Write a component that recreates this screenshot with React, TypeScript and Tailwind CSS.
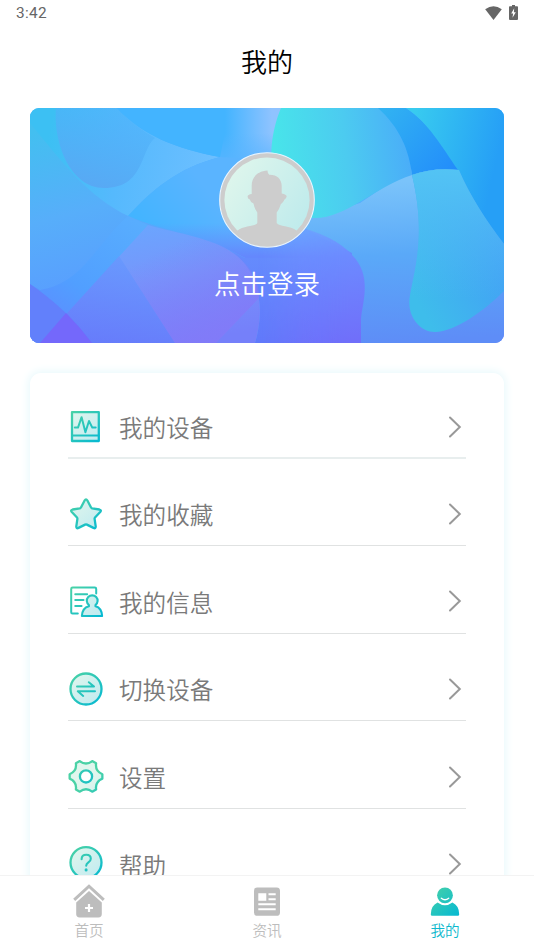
import type { ReactNode } from 'react';

/* ------------------------------------------------------------------ */
/*  Menu icons — two-tone line art on a 36px grid                     */
/* ------------------------------------------------------------------ */

const STROKE = 'url(#icon-stroke)';
const FILL = 'url(#icon-fill)';

/** Gradients shared by the menu icons and the active tab. */
function IconGradients() {
    return (
        <svg className="absolute size-0" aria-hidden="true">
            <defs>
                <linearGradient id="icon-stroke" gradientUnits="userSpaceOnUse" x1="4" y1="2" x2="31" y2="33">
                    <stop offset="0" stopColor="#4ad2a6" />
                    <stop offset="1" stopColor="#06b9d2" />
                </linearGradient>
                <linearGradient id="icon-fill" gradientUnits="userSpaceOnUse" x1="4" y1="2" x2="31" y2="33">
                    <stop offset="0" stopColor="#e0f6ed" />
                    <stop offset="1" stopColor="#bfeaf0" />
                </linearGradient>
            </defs>
        </svg>
    );
}

function MenuIcon({ children }: { children: ReactNode }) {
    return (
        <svg
            viewBox="0 0 36 36"
            className="size-9 shrink-0 overflow-visible"
            fill="none"
            stroke={STROKE}
            strokeWidth="2.3"
            strokeLinecap="round"
            strokeLinejoin="round"
            aria-hidden="true"
        >
            {children}
        </svg>
    );
}

const MENU: { label: string; icon: ReactNode }[] = [
    {
        label: '我的设备',
        icon: (
            <>
                <rect x="4" y="3.2" width="26.8" height="28.8" fill={FILL} />
                <path d="M4 26.4 30.8 26.5" strokeWidth="2" />
                <path d="M6.8 18.6H10l3.6-10.4 3.8 15L21 12l3.3 6.6h3.4" strokeWidth="2" />
            </>
        ),
    },
    {
        label: '我的收藏',
        icon: (
            <path
                d="M16.6 3.7q1.4-2.4 2.8 0l3.5 6.8q.4.8 1.3 1l7.2 1.2q2.4.6.8 2.5l-5.2 5.5q-.5.6-.4 1.4l1.1 7.5q.1 2.6-2.2 1.5l-6.6-3.3q-.9-.4-1.8 0l-6.6 3.3q-2.3 1.1-2.2-1.5l1.1-7.5q.1-.8-.4-1.4L3.8 15.2q-1.6-1.9.8-2.5l7.2-1.2q.9-.2 1.3-1z"
                transform="translate(0 .8)"
                fill={FILL}
            />
        ),
    },
    {
        label: '我的信息',
        icon: (
            <>
                <path d="M28.2 9.4V5q0-1.4-1.4-1.4H4.6Q3.2 3.6 3.2 5v23.2q0 1.4 1.4 1.4h5.2" strokeWidth="2" />
                <path d="M7.2 10.2h12M7.2 16h8.4M7.2 22h6.4" strokeWidth="1.9" />
                <path
                    d="M20.9 21a5.4 5.4 0 1 1 6.6 0v1.2q6.2 1.6 6.6 9.8H13.9q.4-8.2 7-9.8z"
                    fill={FILL}
                    strokeWidth="2.1"
                />
            </>
        ),
    },
    {
        label: '切换设备',
        icon: (
            <>
                <circle cx="18" cy="17" r="15.5" fill={FILL} />
                <path d="M9 14.5h17L20.8 10.2M27 19.3H9.8l5.4 4.6" strokeWidth="2" />
            </>
        ),
    },
    {
        label: '设置',
        icon: (
            <>
                <path
                    transform="translate(18 17.4)"
                    d="M16.35-2.2v4.4Q9 5.2 10.1 13.1L6.2 15.3Q0 10.4-6.2 15.3l-3.9-2.2Q-9 5.2-16.35 2.2v-4.4Q-9-5.2-10.1-13.1L-6.2-15.3Q0-10.4 6.2-15.3l3.9 2.2Q9-5.2 16.35-2.2z"
                    fill={FILL}
                />
                <circle cx="18" cy="17.4" r="6.1" fill="#fff" />
            </>
        ),
    },
    {
        label: '帮助',
        icon: (
            <>
                <circle cx="18" cy="15.6" r="15.5" fill={FILL} />
                <path d="M13.6 12.2q0-4.5 4.7-4.5 4.5 0 4.5 4 0 2-2.4 3.7-2.2 1.5-2.2 3.3" strokeWidth="2.1" />
                <path d="M18.1 22.8v.2" strokeWidth="3" />
            </>
        ),
    },
];

/* ------------------------------------------------------------------ */
/*  Status bar                                                        */
/* ------------------------------------------------------------------ */

function StatusBar() {
    return (
        <div className="flex h-7 shrink-0 items-center justify-between px-4 text-[#666]">
            <span className="font-[Roboto] text-[15.4px] font-[450] tracking-[0.3px]">3:42</span>
            <div className="flex items-center gap-[7px] pb-[3px]">
                <svg viewBox="0 0 17 14" className="h-3.5 w-[17px]" fill="currentColor">
                    <path d="M8.5 14 .2 3.2Q8.5-2.6 16.8 3.2z" />
                </svg>
                <svg viewBox="0 0 9 15" className="h-[15px] w-[9px]">
                    <path d="M3 0h3v1.2h2.2q.8 0 .8.8v12q0 1-1 1H1q-1 0-1-1V2q0-.8.8-.8H3z" fill="currentColor" />
                    <path d="M5.2 3.2 2.2 8.6h1.9l-.6 4.2 3.3-5.6H4.9z" fill="#fff" />
                </svg>
            </div>
        </div>
    );
}

/* ------------------------------------------------------------------ */
/*  Login banner                                                      */
/* ------------------------------------------------------------------ */

function BannerArt() {
    return (
        <svg viewBox="0 0 474 235" preserveAspectRatio="none" className="absolute inset-0 size-full" aria-hidden="true">
            <defs>
                <linearGradient id="sky" x1="0" y1="0" x2="0" y2="1">
                    <stop offset="0" stopColor="#45b4ff" />
                    <stop offset=".48" stopColor="#56adff" />
                    <stop offset=".62" stopColor="#658cfd" />
                    <stop offset="1" stopColor="#6079fb" />
                </linearGradient>
                <linearGradient id="haze" gradientUnits="userSpaceOnUse" x1="195" y1="0" x2="242" y2="0">
                    <stop offset="0" stopColor="#8fc3ff" stopOpacity="0" />
                    <stop offset="1" stopColor="#8fc3ff" />
                </linearGradient>
                <linearGradient id="haze-down" gradientUnits="userSpaceOnUse" x1="0" y1="25" x2="0" y2="62">
                    <stop offset="0" stopColor="#5ab4ff" stopOpacity="0" />
                    <stop offset="1" stopColor="#5ab4ff" />
                </linearGradient>
                <linearGradient id="band" gradientUnits="userSpaceOnUse" x1="20" y1="20" x2="180" y2="50">
                    <stop offset="0" stopColor="#3cc0f3" />
                    <stop offset=".45" stopColor="#55b9fd" />
                    <stop offset="1" stopColor="#6cbfff" />
                </linearGradient>
                <linearGradient id="blob" gradientUnits="userSpaceOnUse" x1="95" y1="0" x2="70" y2="80">
                    <stop offset="0" stopColor="#4db4fb" stopOpacity=".5" />
                    <stop offset="1" stopColor="#58a9f4" />
                </linearGradient>
                <linearGradient id="wing" gradientUnits="userSpaceOnUse" x1="105" y1="108" x2="165" y2="65">
                    <stop offset="0" stopColor="#43b4ff" />
                    <stop offset="1" stopColor="#5ab4ff" />
                </linearGradient>
                <linearGradient id="wing-shade" gradientUnits="userSpaceOnUse" x1="0" y1="115" x2="0" y2="148">
                    <stop offset="0" stopColor="#658cfd" stopOpacity="0" />
                    <stop offset="1" stopColor="#6488fd" />
                </linearGradient>
                <linearGradient id="hill" gradientUnits="userSpaceOnUse" x1="20" y1="20" x2="65" y2="190">
                    <stop offset="0" stopColor="#43bff0" />
                    <stop offset=".5" stopColor="#57aefa" />
                    <stop offset="1" stopColor="#599cff" />
                </linearGradient>
                <linearGradient id="hill-blue" gradientUnits="userSpaceOnUse" x1="100" y1="110" x2="30" y2="220">
                    <stop offset="0" stopColor="#58adfe" />
                    <stop offset=".65" stopColor="#519fff" />
                    <stop offset="1" stopColor="#5c8dff" />
                </linearGradient>
                <linearGradient id="lilac" gradientUnits="userSpaceOnUse" x1="130" y1="115" x2="150" y2="235">
                    <stop offset="0" stopColor="#6ba5fe" />
                    <stop offset=".45" stopColor="#7695fb" />
                    <stop offset="1" stopColor="#7580fa" />
                </linearGradient>
                <linearGradient id="lilac-left" gradientUnits="userSpaceOnUse" x1="100" y1="130" x2="80" y2="235">
                    <stop offset="0" stopColor="#679fff" />
                    <stop offset="1" stopColor="#637bfb" />
                </linearGradient>
                <linearGradient id="mauve" gradientUnits="userSpaceOnUse" x1="135" y1="140" x2="180" y2="225">
                    <stop offset="0" stopColor="#827ff8" stopOpacity="0" />
                    <stop offset="1" stopColor="#837af8" stopOpacity=".85" />
                </linearGradient>
                <linearGradient id="violet" gradientUnits="userSpaceOnUse" x1="285" y1="112" x2="305" y2="235">
                    <stop offset="0" stopColor="#6fa4ff" />
                    <stop offset=".32" stopColor="#6c8bff" />
                    <stop offset="1" stopColor="#706ffa" />
                </linearGradient>
                {/* lets the violet shape melt into the background on its left */}
                <linearGradient id="melt" gradientUnits="userSpaceOnUse" x1="228" y1="0" x2="318" y2="0">
                    <stop offset="0" stopColor="#fff" stopOpacity="0" />
                    <stop offset=".5" stopColor="#fff" stopOpacity=".75" />
                    <stop offset="1" stopColor="#fff" />
                </linearGradient>
                <mask id="melt-mask" maskUnits="userSpaceOnUse" x="200" y="100" width="150" height="135">
                    <rect x="200" y="100" width="150" height="135" fill="url(#melt)" />
                </mask>
                <linearGradient id="teal" gradientUnits="userSpaceOnUse" x1="245" y1="40" x2="385" y2="25">
                    <stop offset="0" stopColor="#48e4ea" />
                    <stop offset=".5" stopColor="#4ccbf0" />
                    <stop offset="1" stopColor="#4aaaf9" />
                </linearGradient>
                <linearGradient id="deep" gradientUnits="userSpaceOnUse" x1="355" y1="0" x2="428" y2="60">
                    <stop offset="0" stopColor="#31b2f2" />
                    <stop offset="1" stopColor="#228cfb" />
                </linearGradient>
                <linearGradient id="corner" gradientUnits="userSpaceOnUse" x1="385" y1="0" x2="474" y2="20">
                    <stop offset="0" stopColor="#38cbef" />
                    <stop offset="1" stopColor="#269ff6" />
                </linearGradient>
                <linearGradient id="lens" gradientUnits="userSpaceOnUse" x1="350" y1="75" x2="360" y2="235">
                    <stop offset="0" stopColor="#7ac3fa" />
                    <stop offset=".45" stopColor="#5aa9f8" />
                    <stop offset="1" stopColor="#5e8df7" />
                </linearGradient>
                <linearGradient id="drop" gradientUnits="userSpaceOnUse" x1="385" y1="190" x2="474" y2="140">
                    <stop offset="0" stopColor="#3ebdeb" />
                    <stop offset="1" stopColor="#439ef6" />
                </linearGradient>
                <linearGradient id="drop-top" gradientUnits="userSpaceOnUse" x1="0" y1="60" x2="0" y2="190">
                    <stop offset="0" stopColor="#53c4f4" />
                    <stop offset="1" stopColor="#53c4f4" stopOpacity="0" />
                </linearGradient>
            </defs>

            <rect width="474" height="235" fill="url(#sky)" />

            {/* left side waves */}
            <path d="M0 0H87C112 27 146 41 190 49C147 60 122 82 98 108C64 96 30 58 0 17z" fill="url(#band)" />
            <path d="M26 0H87Q105 19 125 30C110 42 115 80 74 80C40 80 23 34 26 0z" fill="url(#blob)" />
            <path d="M87 0C112 27 146 41 190 49L270 62V0z" fill="#43b4ff" />
            <rect x="190" width="80" height="62" fill="url(#haze)" />
            <path d="M190 49L195 25H270V62z" fill="url(#haze-down)" />
            <path d="M190 49C147 60 122 82 98 108C130 128 170 125 215 150H300V55z" fill="url(#wing)" />
            <path d="M98 108C130 128 170 125 215 150H300V108z" fill="url(#wing-shade)" />
            <path d="M0 15C35 58 58 88 98 108C135 124 176 127 203 145C224 159 230 187 230 205Q229 222 225 235H0z" fill="url(#hill)" />
            <path d="M118 117L98 108C65 137 53 175 10 182L0 176V235H120z" fill="url(#hill-blue)" />
            <path d="M10 235L118 117C150 126 182 130 203 145C224 159 230 187 230 205Q229 222 225 235z" fill="url(#lilac)" />
            <path d="M10 235L89 148L145 235z" fill="url(#lilac-left)" opacity=".8" />
            <path d="M89 148L118 117C150 126 182 130 203 145C224 159 230 180 229 190L186 235H145z" fill="url(#mauve)" />
            <path d="M0 176Q38 202 62 235H0z" fill="#6280fb" />
            <path d="M36 205L10 235H62Q50 219 36 205z" fill="#7468fb" />

            {/* right side waves */}
            <path d="M282 110L330 95L382 60L428 62L474 183V235H322V145L270 118z" fill="url(#lens)" />
            <path d="M251 0H348C370 20 379 42 382 67C346 78 315 112 282 110C240 105 232 45 251 0z" fill="url(#teal)" />
            <path d="M348 0H376C400 16 414 39 430 62Q404 59 382 67C379 42 370 20 348 0z" fill="url(#deep)" />
            <path d="M376 0H474V136C448 104 438 80 428 62C412 39 398 14 376 0z" fill="url(#corner)" />
            <path d="M382 67Q404 59 429 62C440 88 456 112 474 136V183C455 202 425 224 405 224C389 224 376 207 380 187C385 160 396 125 382 67z" fill="url(#drop)" />
            <path d="M382 67Q404 59 429 62C440 88 456 112 474 136V183C455 202 425 224 405 224C389 224 376 207 380 187C385 160 396 125 382 67z" fill="url(#drop-top)" />
            <path
                d="M225 235V137L262 117C290 124 310 133 322 147C343 168 332 195 331 211V235z"
                fill="url(#violet)"
                mask="url(#melt-mask)"
            />
        </svg>
    );
}

function Avatar() {
    return (
        <svg viewBox="0 0 96 96" className="size-24" aria-hidden="true">
            <defs>
                <linearGradient id="avatar-bg" x1="0" y1="0.2" x2="1" y2="0.8">
                    <stop offset="0" stopColor="#dff6ec" />
                    <stop offset="1" stopColor="#bdeaec" />
                </linearGradient>
                <clipPath id="avatar-clip">
                    <circle cx="48" cy="48" r="45" />
                </clipPath>
            </defs>
            <circle cx="48" cy="48" r="47.3" fill="#cdcdcd" stroke="#e9f5ff" strokeWidth="1.1" />
            <circle cx="48" cy="48" r="42.6" fill="url(#avatar-bg)" />
            <path
                clipPath="url(#avatar-clip)"
                d="M18 79C25 73 36 75 38.3 71V60.5Q35.5 57 34.5 51.5Q31.5 50.5 30.8 47.5Q28.5 46.5 28.6 44.5Q28.8 42.5 32.7 42V34C32.5 26 38 19 48.5 18.5Q48.5 21.5 50.2 22.7C58 22.5 62.7 27 62.7 34V41.5Q67.5 42.5 67.7 44.2Q67.3 46.5 65.5 47.5Q64 51 61.8 52.3Q60.5 57 57.7 60.5V71C60 75 71 73 78 79L80 96H16z"
                fill="#cdcdcd"
            />
        </svg>
    );
}

function LoginBanner() {
    return (
        <section className="relative mx-[30px] mt-[13px] h-[235px] shrink-0 overflow-hidden rounded-[9px]">
            <BannerArt />
            <div className="relative flex flex-col items-center pt-[44px]">
                <Avatar />
                <span className="mt-[15px] text-[26.5px] leading-[40px] text-white">点击登录</span>
            </div>
        </section>
    );
}

/* ------------------------------------------------------------------ */
/*  Menu list                                                         */
/* ------------------------------------------------------------------ */

function Chevron() {
    return (
        <svg viewBox="0 0 14 22" className="mr-[4px] mb-px ml-auto h-[22px] w-3.5" fill="none">
            <path d="M2 1.5 11.8 11 2 20.5" stroke="#999" strokeWidth="2" strokeLinecap="round" />
        </svg>
    );
}

function MenuCard() {
    return (
        <section className="mx-[30px] mt-[30px] shrink-0 rounded-[11px] bg-white px-[38px] shadow-[0_0_9px_2px_#e9f9fc]">
            <ul className="-mt-0.5">
                {MENU.map(({ label, icon }) => (
                    <li
                        key={label}
                        className="flex h-[87.6px] items-center border-b border-[#e0e2e2] pt-[25px] first:border-b-2 first:border-[#e8eeee] first:pt-[27px]"
                    >
                        <MenuIcon>{icon}</MenuIcon>
                        <span className="ml-[15px] pt-px text-[23.6px] text-[#7a7a7a]">{label}</span>
                        <Chevron />
                    </li>
                ))}
            </ul>
        </section>
    );
}

/* ------------------------------------------------------------------ */
/*  Bottom tabs                                                       */
/* ------------------------------------------------------------------ */

const TABS: { label: string; active?: boolean; icon: ReactNode }[] = [
    {
        label: '首页',
        icon: (
            <>
                <path d="M3.2 16.8 18 3.2 32.8 16.8" fill="none" stroke="currentColor" strokeWidth="3" />
                <path d="M18 8 30.8 19.5V31q0 3.4-3.4 3.4H8.6Q5.2 34.4 5.2 31V19.5z" />
                <path d="M18 21v8M14 25h8" stroke="#fff" strokeWidth="2.2" />
            </>
        ),
    },
    {
        label: '资讯',
        icon: (
            <>
                <rect x="5" y="4.4" width="26" height="28.4" rx="3.4" />
                <path d="M9.3 10.2h8v7.6h-8zM19.5 10.2h7.2v2h-7.2zM19.5 15.2h7.2v2h-7.2zM9.3 20.2h17.4v2H9.3zM9.3 25.2h17.4v2H9.3z" fill="#fff" />
            </>
        ),
    },
    {
        label: '我的',
        active: true,
        icon: (
            <g fill={STROKE}>
                <circle cx="18" cy="12.3" r="7.9" />
                <path d="M10.6 19.4q7.4 5.6 14.8 0 6.8 3 6.8 12 0 1.4-1.4 1.4H5.2q-1.4 0-1.4-1.4 0-9 6.8-12z" />
                <path d="M14.3 15.2q3.7 3.2 7.4 0" fill="none" stroke="#fff" strokeWidth="1.3" strokeLinecap="round" />
            </g>
        ),
    },
];

function TabBar() {
    return (
        <nav className="relative grid h-[75px] shrink-0 grid-cols-3 border-t border-[#f3f3f3] bg-white">
            {TABS.map(({ label, active, icon }) => (
                <div
                    key={label}
                    className={`flex flex-col items-center pt-[7px] ${active ? 'text-[#0cb8cd]' : 'text-[#bdbdbd]'}`}
                >
                    <svg viewBox="0 0 36 36" className="size-9" fill="currentColor" aria-hidden="true">
                        {icon}
                    </svg>
                    <span className="text-[14.6px] leading-[22px]">{label}</span>
                </div>
            ))}
        </nav>
    );
}

export default function App() {
    return (
        <div className="flex h-[950px] w-[534px] flex-col overflow-hidden bg-white font-['Noto_Sans_CJK_SC',sans-serif] font-[350]">
            <IconGradients />
            <StatusBar />
            <main className="flex min-h-0 flex-1 flex-col overflow-hidden">
                <h1 className="flex h-[67px] shrink-0 items-center justify-center pb-[3px] text-[26px] text-black">我的</h1>
                <LoginBanner />
                <MenuCard />
            </main>
            <TabBar />
        </div>
    );
}
